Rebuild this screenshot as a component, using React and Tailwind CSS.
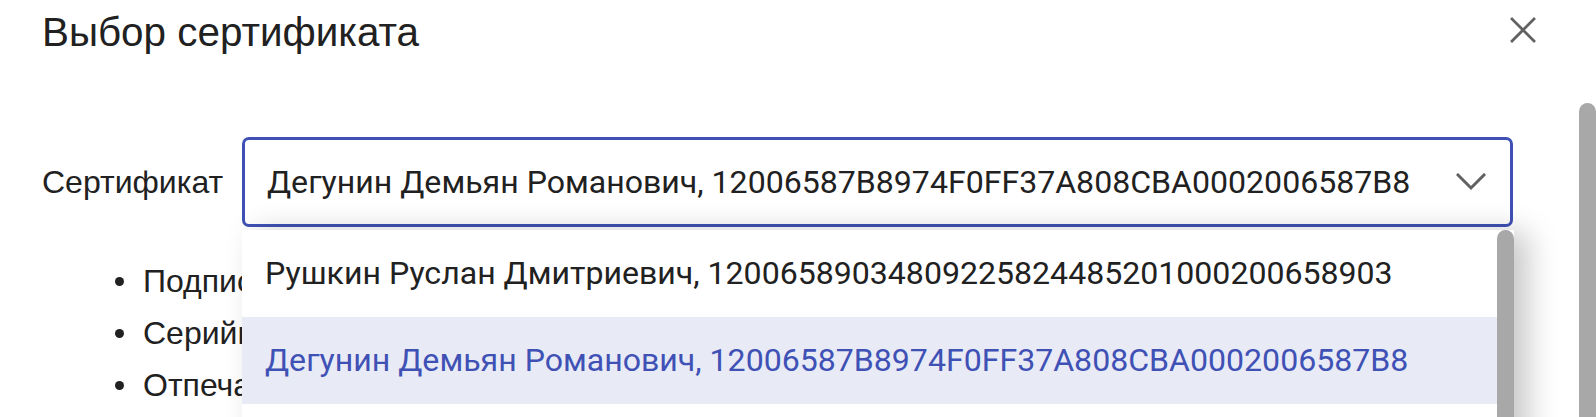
import { useState } from 'react';

const certificates = [
  { id: 'rushkin', name: 'Рушкин Руслан Дмитриевич, 12006589034809225824485201000200658903' },
  { id: 'degunin', name: 'Дегунин Демьян Романович, 12006587B8974F0FF37A808CBA0002006587B8' },
  { id: 'other', name: '' },
];

const details = ['Подписант', 'Серийный номер', 'Отпечаток'];

function CloseIcon() {
  return (
    <svg width="26" height="26" viewBox="0 0 26 26" fill="none" stroke="#616161" strokeWidth="2.7" strokeLinecap="square">
      <path d="M2 2L24 24M24 2L2 24" />
    </svg>
  );
}

function Chevron() {
  return (
    <svg width="30" height="18" viewBox="0 0 30 18" fill="none" stroke="#616161" strokeWidth="3" strokeLinecap="square">
      <path d="M2 2L15 15L28 2" />
    </svg>
  );
}

export default function App() {
  const [selected] = useState('degunin');
  const current = certificates.find((c) => c.id === selected);

  return (
    <div className="w-[1596px] h-[417px] overflow-hidden bg-white text-[#212121] flex flex-col font-['Liberation_Sans',Arial,sans-serif]">
      {/* Header */}
      <div className="h-[103px] shrink-0 flex items-start justify-between pl-[42px] pr-[60px]">
        <h2 className="pt-[9px] text-[40.4px] leading-[46px] font-normal">Выбор сертификата</h2>
        <button className="mt-[17px] w-[26px] h-[26px] flex items-center justify-center">
          <CloseIcon />
        </button>
      </div>

      {/* Body */}
      <div className="flex flex-1 min-h-0">
        <div className="flex-1 pt-[34px] pl-[42px]">
          <div className="flex items-center">
            <label className="w-[200px] shrink-0 text-[32px]">Сертификат</label>
            <div className="relative">
              <div className="w-[1271px] h-[90px] border-[3px] border-[#3f51b5] rounded-[7px] flex items-center justify-between pl-[22px] pr-[24px] font-['Roboto',sans-serif] text-[32.1px]">
                <span>{current.name}</span>
                <Chevron />
              </div>

              {/* Dropdown menu */}
              <div className="absolute left-0 top-full mt-[3px] z-10 w-[1272px] bg-white flex shadow-[14px_2px_28px_rgba(0,0,0,0.22)] font-['Roboto',sans-serif] text-[32.1px]">
                <ul className="flex-1">
                  {certificates.map((c) => (
                    <li
                      key={c.id}
                      className={
                        c.id === selected
                          ? 'h-[87px] flex items-center pl-[23px] bg-[#e8eaf6] text-[#3f51b5]'
                          : 'h-[87px] flex items-center pl-[23px]'
                      }
                    >
                      {c.name}
                    </li>
                  ))}
                </ul>
                <div className="w-[17px] shrink-0">
                  <div className="h-[300px] bg-[#a8a8a8] rounded-t-[9px]" />
                </div>
              </div>
            </div>
          </div>

          <ul className="mt-[28px]">
            {details.map((d) => (
              <li key={d} className="h-[52px] flex items-center text-[32px] leading-[52px]">
                <span className="w-[9px] h-[9px] rounded-full bg-[#212121] ml-[73px] mr-[19px]" />
                {d}
              </li>
            ))}
          </ul>
        </div>

        {/* Page scrollbar */}
        <div className="w-[17px] shrink-0">
          <div className="h-full bg-[#a8a8a8] rounded-t-[9px]" />
        </div>
      </div>
    </div>
  );
}
